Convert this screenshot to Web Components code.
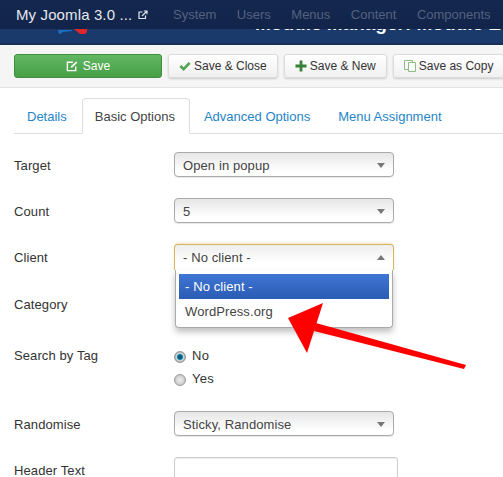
<!DOCTYPE html>
<html>
<head>
<meta charset="utf-8">
<style>
html, body { margin: 0; padding: 0; background: #fff; }
body { width: 503px; height: 477px; overflow: hidden; position: relative; font-family: "Liberation Sans", Arial, sans-serif; font-size: 13px; color: #333; }
</style>
</head>
<body>
<j-navbar></j-navbar>
<j-subhead></j-subhead>
<j-toolbar>
  <j-button kind="primary" icon="edit" wide>Save</j-button>
  <j-button icon="check">Save &amp; Close</j-button>
  <j-button icon="plus">Save &amp; New</j-button>
  <j-button icon="copy">Save as Copy</j-button>
</j-toolbar>
<j-tabs></j-tabs>
<j-form>
  <j-row label="Target"><j-select value="Open in popup"></j-select></j-row>
  <j-row label="Count"><j-select value="5"></j-select></j-row>
  <j-row label="Client"><j-select value="- No client -" open></j-select></j-row>
  <j-row label="Category"></j-row>
  <j-row label="Search by Tag" tall>
    <j-radio checked>No</j-radio>
    <j-radio>Yes</j-radio>
  </j-row>
  <j-row label="Randomise"><j-select value="Sticky, Randomise"></j-select></j-row>
  <j-row label="Header Text"><j-input></j-input></j-row>
</j-form>
<j-annotation></j-annotation>

<script>
class JNavbar extends HTMLElement {
  connectedCallback() {
    this.attachShadow({ mode: 'open' });
    this.shadowRoot.innerHTML = `
      <style>
        :host { display: flex; align-items: center; height: 29px; background: linear-gradient(#14284f, #12244a); overflow: hidden; position: relative; z-index: 1; white-space: nowrap; }
        .brand { color: #e4e8ee; font-size: 15px; letter-spacing: .12px; margin-left: 16px; display: flex; align-items: center; gap: 5px; width: 157px; flex: none; }
        .brand svg { width: 10px; height: 10px; margin-left: 1px; }
        a { color: #53627f; font-size: 13px; margin-right: 20.500px; }
      </style>
      <div class="brand">My Joomla 3.0 ...
        <svg viewBox="0 0 10 10" fill="none" stroke="#e4e8ee" stroke-width="1.2"><path d="M7.5 5.5v3h-6.500v-6.500h3.500"/><path d="M4 6l5-5M5.800 1h3.200v3.200"/></svg>
      </div>
      <a>System</a><a>Users</a><a>Menus</a><a>Content</a><a>Components</a>`;
  }
}

class JSubhead extends HTMLElement {
  connectedCallback() {
    this.attachShadow({ mode: 'open' });
    this.shadowRoot.innerHTML = `
      <style>
        :host { display: block; height: 16px; box-sizing: border-box; background: #1a3a6c; border-bottom: 2px solid #16305a; overflow: hidden; position: relative; white-space: nowrap; }
        .title { color: #fff; font-size: 19px; font-weight: bold; line-height: 24px; margin: -17px 0 0 255px; }
        svg { position: absolute; left: 56px; top: 0; }
      </style>
      <svg width="34" height="6" viewBox="0 0 34 6"><path d="M2 1h14v1l-9 1-3 2H3z" fill="#1c6fc0"/><path d="M18 0h13v3l-2 2h-5z" fill="#e0252d"/></svg>
      <div class="title">Module Manager: Module Edit</div>`;
  }
}

class JToolbar extends HTMLElement {
  connectedCallback() {
    this.attachShadow({ mode: 'open' });
    this.shadowRoot.innerHTML = `
      <style>
        :host { display: flex; gap: 6px; height: 43px; padding: 9px 0 0 14px; box-sizing: border-box; background: #f5f5f5; border-bottom: 1px solid #e2e2e2; white-space: nowrap; overflow: hidden; }
      </style>
      <slot></slot>`;
  }
}

const BTN_ICONS = {
  edit: '<svg width="12" height="12" viewBox="0 0 13 13" fill="none" stroke="#fff" stroke-width="1.500"><path d="M10.500 7v4.500h-9v-9h6"/><path d="M5 8.500l.5-2 5.500-5 1.300 1.500-5.500 5z" fill="#fff" stroke="none"/></svg>',
  check: '<svg width="12" height="12" viewBox="0 0 13 13" fill="none" stroke="#51a351" stroke-width="2.800"><path d="M1.500 6.500l3.500 3.500 6.500-7"/></svg>',
  plus: '<svg width="12" height="12" viewBox="0 0 13 13" fill="#378137"><path d="M5 0.500h3v4.500h4.500v3h-4.500v4.500h-3v-4.500h-4.500v-3h4.500z"/></svg>',
  copy: '<svg width="12" height="12" viewBox="0 0 12 12" fill="none" stroke="#8fbc85" stroke-width="1"><path d="M.5.500h8v9h-8z"/><path d="M4.500 2.500h7v9h-7z" fill="#fbfdfa"/></svg>'
};

class JButton extends HTMLElement {
  connectedCallback() {
    this.attachShadow({ mode: 'open' });
    this.shadowRoot.innerHTML = `
      <style>
        :host { display: inline-flex; align-items: center; justify-content: center; gap: 3px; box-sizing: border-box; height: 24px; padding: 0 10px; flex: none;
          font-size: 12px; border-radius: 3px; }
        :host([kind="primary"]) { gap: 5px; background: linear-gradient(#62b762, #46a046); border: 1px solid #3f8f3f; color: #fff; }
        :host(:not([kind="primary"])) { background: linear-gradient(#fff, #f0f0f0); border: 1px solid #dcdcdc; color: #333; box-shadow: 0 1px 2px rgba(0,0,0,.18); }
        :host([wide]) { width: 148px; }
        svg { display: block; }
      </style>
      ${BTN_ICONS[this.getAttribute('icon')] || ''}<slot></slot>`;
  }
}

class JTabs extends HTMLElement {
  connectedCallback() {
    this.attachShadow({ mode: 'open' });
    this.shadowRoot.innerHTML = `
      <style>
        :host { display: flex; gap: 2px; height: 36px; margin: 10px 0 0 14px; box-sizing: border-box; border-bottom: 1px solid #ddd; font-size: 13px; white-space: nowrap; }
        a { display: block; padding: 11px 13px 0; color: #1f85c9; height: 36px; box-sizing: border-box; }
        a:first-child { margin-right: 1.500px; }
        a:nth-child(3) { margin-right: -1px; }
        a.active { color: #444; background: #fff; border: 1px solid #ddd; border-bottom-color: #fff; border-radius: 4px 4px 0 0; padding: 10px 14px 0 12px; }
      </style>
      <a>Details</a><a class="active">Basic Options</a><a>Advanced Options</a><a>Menu Assignment</a>`;
  }
}

class JForm extends HTMLElement {
  connectedCallback() {
    this.attachShadow({ mode: 'open' });
    this.shadowRoot.innerHTML = `
      <style>
        :host { display: flex; flex-direction: column; gap: 21px; padding: 18px 0 0 14px; }
      </style>
      <slot></slot>`;
  }
}

class JRow extends HTMLElement {
  connectedCallback() {
    this.attachShadow({ mode: 'open' });
    this.shadowRoot.innerHTML = `
      <style>
        :host { display: grid; grid-template-columns: 160px 1fr; min-height: 25px; align-items: start; font-size: 13px; letter-spacing: .1px; }
        :host([tall]) { margin-top: 5px; margin-bottom: 3px; }
        .label { padding-top: 6px; }
        :host([tall]) .field { padding-top: 4px; }
        .field { display: flex; flex-direction: column; gap: 5px; }
      </style>
      <div class="label">${this.getAttribute('label') || ''}</div>
      <div class="field"><slot></slot></div>`;
  }
}

class JSelect extends HTMLElement {
  connectedCallback() {
    const open = this.hasAttribute('open');
    this.attachShadow({ mode: 'open' });
    this.shadowRoot.innerHTML = `
      <style>
        :host { display: flex; align-items: center; justify-content: space-between; position: relative; box-sizing: border-box; width: 220px; height: 25px; padding: 0 8px 0 8px;
          background: linear-gradient(#e6e6e6, #fff 80%); border: 1px solid #aaa; border-radius: 4px; box-shadow: 0 1px 1px rgba(0,0,0,.1); color: #444; font-size: 13px; letter-spacing: .1px; }
        :host([open]) { background: linear-gradient(#eee, #fff 70%); border-color: #d9b560; border-bottom: 0; border-radius: 4px 4px 0 0; height: 26px; box-shadow: 0 -1px 2px rgba(218,170,70,.35); }
        span { padding-top: 1px; }
        :host([open]) span { padding-top: 0; }
        i { width: 0; height: 0; border: 4px solid transparent; border-top: 5px solid #777; border-bottom: 0; margin-top: 1px; }
        :host([open]) i { border-top: 0; border-bottom: 5px solid #777; margin-top: 0; }
        .drop { position: absolute; left: 0; top: 25px; width: 218px; height: 58px; box-sizing: border-box; padding: 4px 3px; background: #fff; border: 1px solid #aaa; border-top: 0; border-radius: 0 0 4px 4px; box-shadow: 0 4px 6px rgba(0,0,0,.25); z-index: 2; }
        .opt { height: 25px; line-height: 25px; padding: 0 6px; }
        .opt.on { background: linear-gradient(#3f75d4, #2a5cb4); color: #fff; }
      </style>
      <span>${this.getAttribute('value') || ''}</span><i></i>
      ${open ? '<div class="drop"><div class="opt on">- No client -</div><div class="opt">WordPress.org</div></div>' : ''}`;
  }
}

class JRadio extends HTMLElement {
  connectedCallback() {
    this.attachShadow({ mode: 'open' });
    this.shadowRoot.innerHTML = `
      <style>
        :host { display: flex; align-items: center; gap: 6px; height: 18px; font-size: 13px; letter-spacing: .3px; }
        b { width: 12px; height: 12px; border-radius: 50%; box-sizing: border-box; border: 1px solid #999; background: radial-gradient(#eee, #bbb); margin-top: 3px; }
        :host([checked]) b { background: radial-gradient(#0c5c84 28%, #2aa0c0 40%, #dcdcdc 52%, #aaa 70%); }
      </style>
      <b></b><slot></slot>`;
  }
}

class JInput extends HTMLElement {
  connectedCallback() {
    this.attachShadow({ mode: 'open' });
    this.shadowRoot.innerHTML = `
      <style>
        :host { display: block; box-sizing: border-box; width: 224px; height: 30px; border: 1px solid #ccc; border-radius: 3px; box-shadow: inset 0 1px 1px rgba(0,0,0,.08); background: #fff; }
      </style>`;
  }
}

class JAnnotation extends HTMLElement {
  connectedCallback() {
    this.attachShadow({ mode: 'open' });
    this.shadowRoot.innerHTML = `
      <style>
        :host { position: absolute; left: 0; top: 0; z-index: 5; pointer-events: none; }
        svg { display: block; }
      </style>
      <svg width="503" height="477" viewBox="0 0 503 477">
        <path d="M316 323L466 365L464 369L314 331z" fill="#f00"/>
        <path d="M288 318L323 303L307 353z" fill="#f00"/>
      </svg>`;
  }
}

customElements.define('j-navbar', JNavbar);
customElements.define('j-subhead', JSubhead);
customElements.define('j-toolbar', JToolbar);
customElements.define('j-button', JButton);
customElements.define('j-tabs', JTabs);
customElements.define('j-form', JForm);
customElements.define('j-row', JRow);
customElements.define('j-select', JSelect);
customElements.define('j-radio', JRadio);
customElements.define('j-input', JInput);
customElements.define('j-annotation', JAnnotation);
</script>
</body>
</html>
